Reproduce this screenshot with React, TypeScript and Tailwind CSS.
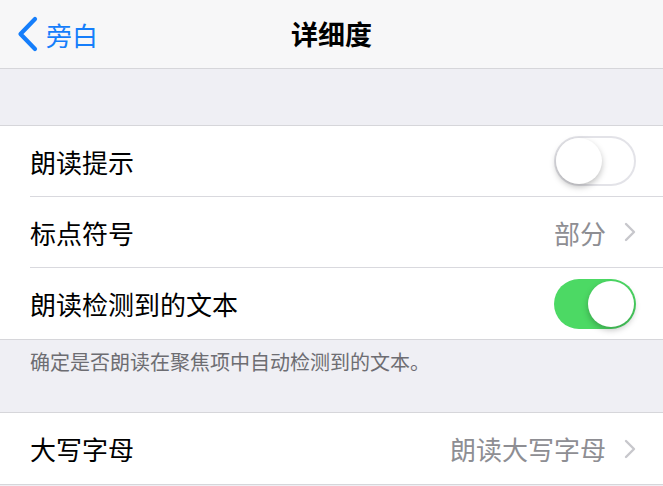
import React from 'react';

const font = { fontFamily: '"Noto Sans CJK SC", "Noto Sans", sans-serif' };

function Toggle({ on }: { on: boolean }) {
  return (
    <div
      className={
        'relative w-[82px] h-[50px] rounded-full ' +
        (on ? 'bg-[#4cd964]' : 'bg-white border-[2px] border-[#e3e3e8]')
      }
    >
      <div
        className={
          'absolute w-[46px] h-[46px] rounded-full bg-white shadow-[0_3px_6px_rgba(0,0,0,0.25)] ' +
          (on ? 'top-[2px] right-[2px]' : 'left-[0px] top-[0px]')
        }
      />
    </div>
  );
}

function Chevron() {
  return (
    <svg width="12" height="20" viewBox="0 0 12 20" className="ml-[18px]">
      <path d="M2 2 L10 10 L2 18" fill="none" stroke="#c7c7cc" strokeWidth="2.4" strokeLinecap="round" strokeLinejoin="round" />
    </svg>
  );
}

function Row({ label, children, last }: { label: string; children?: React.ReactNode; last?: boolean }) {
  return (
    <div className="pl-[30px] bg-white">
      <div
        className={
          'h-[71px] flex items-center justify-between pr-[27px] ' +
          (last ? '' : 'border-b border-[#d9d9de]')
        }
      >
        <span className="text-[26px] text-black">{label}</span>
        <div className="flex items-center">{children}</div>
      </div>
    </div>
  );
}

export default function App() {
  return (
    <div className="w-[663px] h-[486px] overflow-hidden bg-[#efeff4]" style={font}>
      {/* Nav bar */}
      <div className="relative h-[69px] bg-[#f7f7f8] border-b border-[#d6d6da] flex items-center justify-center">
        <div className="absolute left-[17px] top-0 h-full flex items-center">
          <svg width="21" height="36" viewBox="0 0 21 36">
            <path d="M18 3 L3.5 18 L18 33" fill="none" stroke="#157efb" strokeWidth="4.2" strokeLinecap="round" strokeLinejoin="round" />
          </svg>
          <span className="ml-[8px] text-[26px] text-[#157efb]">旁白</span>
        </div>
        <span className="text-[27px] font-bold text-black">详细度</span>
      </div>

      <div className="h-[56px]" />

      <div className="border-t border-b border-[#d6d6da]">
        <Row label="朗读提示">
          <Toggle on={false} />
        </Row>
        <Row label="标点符号">
          <span className="text-[26px] text-[#8e8e93]">部分</span>
          <Chevron />
        </Row>
        <Row label="朗读检测到的文本" last>
          <Toggle on />
        </Row>
      </div>

      <div className="h-[72px] px-[30px] pt-[7px]">
        <span className="text-[20px] text-[#6d6d72]">确定是否朗读在聚焦项中自动检测到的文本。</span>
      </div>

      <div className="border-t border-b border-[#d6d6da]">
        <Row label="大写字母" last>
          <span className="text-[26px] text-[#8e8e93]">朗读大写字母</span>
          <Chevron />
        </Row>
      </div>
    </div>
  );
}
